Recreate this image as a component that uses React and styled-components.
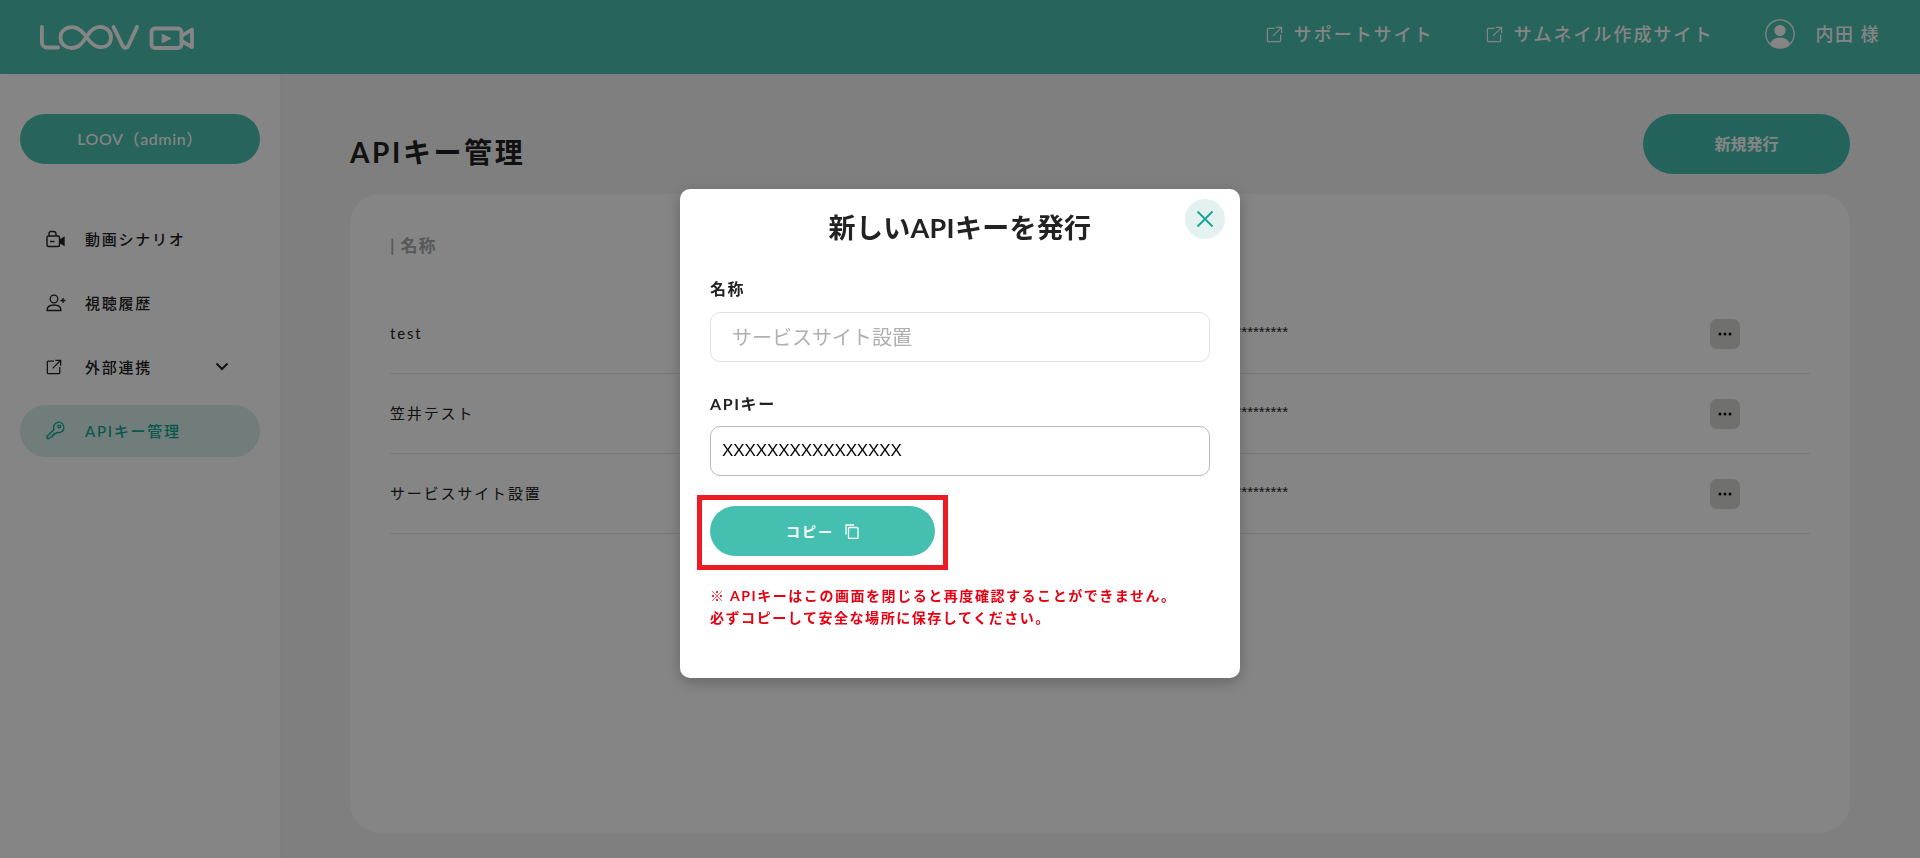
import React from "react";
import styled, { createGlobalStyle } from "styled-components";

const FONT = `"Lato", "Noto Sans CJK JP", sans-serif`;

const Global = createGlobalStyle`
  html, body { margin: 0; padding: 0; height: 100%; overflow: hidden; }
  body { font-family: ${FONT}; color: #222; background: #f4f4f4; }
  * { box-sizing: border-box; }
`;

const Page = styled.div`
  display: flex;
  flex-direction: column;
  height: 100vh;
`;

const Header = styled.header`
  flex: 0 0 74px;
  display: flex;
  align-items: center;
  justify-content: space-between;
  padding: 0 40px;
  background: #4bc0b1;
  color: #fff;
`;

const HeaderNav = styled.nav`
  display: flex;
  align-items: center;
  gap: 52px;
  margin-top: -6px;
`;

const HeaderLink = styled.a`
  display: flex;
  align-items: center;
  gap: 11px;
  font-size: 18px;
  font-weight: 500;
  letter-spacing: 2px;
  line-height: 30px;
`;

const UserBox = styled.div`
  display: flex;
  align-items: center;
  gap: 20px;
  font-size: 18px;
  font-weight: 500;
  letter-spacing: 1.5px;
  line-height: 30px;
`;

const Body = styled.div`
  flex: 1;
  display: flex;
  min-height: 0;
`;

const Sidebar = styled.aside`
  flex: 0 0 280px;
  background: #fff;
  padding: 40px 20px;
  box-shadow: 3px 0 8px rgba(0, 0, 0, 0.03);
`;

const OrgButton = styled.div`
  height: 50px;
  border-radius: 25px;
  padding-bottom: 2px;
  background: #4bc0b1;
  color: #fff;
  display: flex;
  align-items: center;
  justify-content: center;
  font-size: 16px;
  font-weight: 500;
  letter-spacing: 0.6px;
`;

const NavList = styled.ul`
  list-style: none;
  margin: 49px 0 0;
  padding: 0;
  display: flex;
  flex-direction: column;
  gap: 12px;
`;

const NavItem = styled.li`
  height: 52px;
  border-radius: 26px;
  display: flex;
  align-items: center;
  padding: 0 31px 1px 26px;
  font-size: 15px;
  font-weight: 500;
  letter-spacing: 1.75px;
  background: ${(p) => (p.$active ? "#d6efec" : "transparent")};
  color: ${(p) => (p.$active ? "#12a594" : "#222")};
`;

const NavIconBox = styled.span`
  flex: 0 0 39px;
  display: flex;
  align-items: center;
`;

const NavLabel = styled.span`
  flex: 1;
`;

const Main = styled.main`
  flex: 1;
  padding: 40px 70px 25px;
  display: flex;
  flex-direction: column;
  min-width: 0;
`;

const TitleRow = styled.div`
  display: flex;
  align-items: flex-end;
  justify-content: space-between;
  margin-bottom: 20px;
`;

const PageTitle = styled.h1`
  margin: 0 0 2px;
  font-size: 28px;
  font-weight: 700;
  line-height: 40px;
  letter-spacing: 2.6px;
  color: #222;
`;

const IssueButton = styled.button`
  width: 207px;
  height: 60px;
  border: 0;
  border-radius: 30px;
  padding: 0 0 2px;
  background: #45bfb0;
  color: #fff;
  font-family: ${FONT};
  font-size: 16px;
  font-weight: 700;
`;

const Card = styled.section`
  flex: 1;
  background: #fff;
  border-radius: 30px;
  padding: 40px 40px;
`;

const TableHead = styled.div`
  font-size: 17px;
  font-weight: 700;
  line-height: 24px;
  letter-spacing: 1px;
  color: #a4acaa;
  margin-bottom: 36px;
`;

const Row = styled.div`
  height: 80px;
  display: grid;
  grid-template-columns: 706px 192px 1fr;
  align-items: center;
  border-bottom: 1px solid #e8e8e8;
  font-size: 15px;
  letter-spacing: 1.85px;
  color: #222;
`;

const NameCell = styled.span`
  margin-bottom: 2px;
`;

const KeyCell = styled.span`
  margin-bottom: 4px;
  font-family: "Liberation Sans", sans-serif;
  font-size: 15px;
  letter-spacing: 0;
  text-align: right;
  white-space: nowrap;
  overflow: hidden;
  direction: rtl;
`;

const DotsButton = styled.button`
  justify-self: end;
  margin-right: 70px;
  width: 30px;
  height: 30px;
  padding: 0;
  border: 0;
  border-radius: 7px;
  background: #d6d8d4;
  display: flex;
  align-items: center;
  justify-content: center;
`;

const Overlay = styled.div`
  position: fixed;
  inset: 0;
  background: rgba(0, 0, 0, 0.48);
  display: flex;
  justify-content: center;
  align-items: flex-start;
  padding-top: 189px;
`;

const Modal = styled.div`
  position: relative;
  width: 560px;
  background: #fff;
  border-radius: 10px;
  padding: 21px 30px 49px;
  box-shadow: 0 4px 16px rgba(0, 0, 0, 0.25);
`;

const CloseButton = styled.button`
  position: absolute;
  top: 10px;
  right: 15px;
  width: 40px;
  height: 40px;
  padding: 0;
  border: 0;
  border-radius: 50%;
  background: #e3f2f0;
  color: #12a594;
  display: flex;
  align-items: center;
  justify-content: center;
`;

const ModalTitle = styled.h2`
  margin: 0 0 31px;
  text-align: center;
  font-size: 27px;
  font-weight: 700;
  line-height: 36px;
  letter-spacing: 0.3px;
  color: #222;
`;

const Field = styled.label`
  display: flex;
  flex-direction: column;
  gap: ${(p) => p.$gap}px;
  margin-bottom: 30px;
`;

const FieldLabel = styled.span`
  font-size: 16px;
  font-weight: 700;
  line-height: 24px;
  letter-spacing: 1.6px;
  color: #222;
`;

const NameInput = styled.input`
  height: 50px;
  border: 1px solid #e2e2e2;
  border-radius: 10px;
  padding: 0 21px;
  font-family: ${FONT};
  font-size: 20px;
  outline: none;
  background: #fff;
  &::placeholder { color: #b0b0b0; opacity: 1; }
`;

const KeyInput = styled.input`
  height: 50px;
  border: 1px solid #bbbbbb;
  border-radius: 10px;
  padding: 0 11px;
  font-family: "Liberation Sans", sans-serif;
  font-size: 17px;
  letter-spacing: -0.1px;
  color: #000;
  outline: none;
  background: #fff;
`;

const CopyWrap = styled.div`
  position: relative;
  width: 225px;
  &::after {
    content: "";
    position: absolute;
    left: -13px;
    right: -13px;
    top: -11px;
    bottom: -14px;
    border: 5px solid #ed1c24;
    pointer-events: none;
  }
`;

const CopyButton = styled.button`
  width: 100%;
  height: 50px;
  border: 0;
  border-radius: 25px;
  background: #45bfb0;
  color: #fff;
  font-family: ${FONT};
  font-size: 14px;
  font-weight: 700;
  letter-spacing: 2px;
  display: flex;
  align-items: center;
  justify-content: center;
  gap: 11px;
`;

const Notice = styled.p`
  margin: 29px 0 0;
  font-size: 14px;
  font-weight: 700;
  line-height: 22px;
  letter-spacing: 1.55px;
  color: #e60012;
`;

const ExternalIcon = ({ size = 17, w = 1.3 }) => (
  <svg width={size} height={size} viewBox="0 0 18 18" fill="none" stroke="currentColor" strokeWidth={w}>
    <path d="M9 2.5H2.5a1 1 0 0 0-1 1v12a1 1 0 0 0 1 1h12a1 1 0 0 0 1-1V9" />
    <path d="M7.5 10.5 16 2M10.5 1.5h6v6" />
  </svg>
);

const Logo = () => (
  <svg width="154" height="25" viewBox="0 0 154 25" fill="none" stroke="currentColor" strokeWidth="3.8" strokeLinecap="round" strokeLinejoin="round">
    <path d="M1.9 1.9V17.5a5 5 0 0 0 5 5H18" />
    <path d="M37 3.2C28 -0.2 20.5 5.5 20.5 12.5S26 23 32 23C40 23 43.5 16 47 11C50.5 5.5 54.5 1.9 60 1.9C67 1.9 71 7 71 12.5C71 18.5 67 23 59 22" />
    <path d="M37 3.2C41 4.6 43.5 8 47 12.5C50 17 53 21 59 22" />
    <path d="M73.5 1.9 82 19.5C84 24 87 24 89 19.5L97 1.9" />
    <rect x="111.5" y="3.5" width="30" height="19.5" rx="3.5" />
    <path d="M141.5 11 152 4.5V22L141.5 16" />
    <path d="M122.5 9.5 131 13.5 122.5 17.5Z" fill="currentColor" strokeWidth="1" />
  </svg>
);

const Avatar = () => (
  <svg width="30" height="30" viewBox="0 0 30 30">
    <defs>
      <clipPath id="av"><circle cx="15" cy="15" r="14" /></clipPath>
    </defs>
    <circle cx="15" cy="15" r="14.2" fill="none" stroke="currentColor" strokeWidth="1.3" />
    <circle cx="15" cy="11.5" r="5.6" fill="currentColor" />
    <ellipse cx="15" cy="26" rx="10" ry="7.5" fill="currentColor" clipPath="url(#av)" />
  </svg>
);

const VideoIcon = () => (
  <svg width="20" height="20" viewBox="0 0 20 20" fill="none" stroke="currentColor" strokeWidth="1.4">
    <path d="M3 7V4.5A2 2 0 0 1 5 2.5H7.5A2.5 2.5 0 0 1 10 5V7" />
    <rect x="1" y="7" width="12.5" height="10.5" rx="1.5" />
    <path d="M4 12.5H8.5" />
    <path d="M14 11 18 8.5V16L14 13.5Z" fill="currentColor" />
  </svg>
);

const UserPlusIcon = () => (
  <svg width="20" height="20" viewBox="0 0 20 20" fill="none" stroke="currentColor" strokeWidth="1.3">
    <circle cx="8" cy="6" r="3.8" />
    <path d="M1 17.5C1 13.5 4.5 12 8 12S15 13.5 15 17.5Z" strokeLinejoin="round" />
    <path d="M14.5 7.5H19.5M17 5V10" />
  </svg>
);

const KeyIcon = () => (
  <svg width="19" height="19" viewBox="0 0 19 19" fill="none" stroke="currentColor" strokeWidth="1.3" strokeLinejoin="round">
    <path d="M8 8.5A5.2 5.2 0 1 1 11 11.3L9.7 12.5H8V14.2H6.3V15.9H4.6L3 17.5H1V15.3Z" />
    <circle cx="13.2" cy="5.5" r="1.4" />
  </svg>
);

const Chevron = () => (
  <svg width="14" height="9" viewBox="0 0 14 9" fill="none" stroke="currentColor" strokeWidth="2">
    <path d="M1.5 1.5 7 7l5.5-5.5" />
  </svg>
);

const CopyIcon = () => (
  <svg width="14" height="15" viewBox="0 0 14 15" fill="none" stroke="currentColor" strokeWidth="1.3">
    <path d="M1 10.5V1H9" />
    <rect x="3.5" y="3.5" width="9.5" height="11" rx="1" />
  </svg>
);

const CloseIcon = () => (
  <svg width="18" height="18" viewBox="0 0 18 18" fill="none" stroke="currentColor" strokeWidth="1.8">
    <path d="M1.5 1.5 16.5 16.5M16.5 1.5 1.5 16.5" />
  </svg>
);

const DotsIcon = () => (
  <svg width="14" height="4" viewBox="0 0 14 4" fill="#111">
    <circle cx="2" cy="2" r="1.5" />
    <circle cx="7" cy="2" r="1.5" />
    <circle cx="12" cy="2" r="1.5" />
  </svg>
);

const rows = ["test", "笠井テスト", "サービスサイト設置"];
const MASK = "*".repeat(33);

export default function App() {
  return (
    <Page>
      <Global />
      <Header>
        <Logo />
        <HeaderNav>
          <HeaderLink><ExternalIcon />サポートサイト</HeaderLink>
          <HeaderLink><ExternalIcon />サムネイル作成サイト</HeaderLink>
          <UserBox><Avatar />内田 様</UserBox>
        </HeaderNav>
      </Header>
      <Body>
        <Sidebar>
          <OrgButton>LOOV（admin）</OrgButton>
          <NavList>
            <NavItem><NavIconBox><VideoIcon /></NavIconBox><NavLabel>動画シナリオ</NavLabel></NavItem>
            <NavItem><NavIconBox><UserPlusIcon /></NavIconBox><NavLabel>視聴履歴</NavLabel></NavItem>
            <NavItem><NavIconBox><ExternalIcon size={16} w={1.4} /></NavIconBox><NavLabel>外部連携</NavLabel><Chevron /></NavItem>
            <NavItem $active><NavIconBox><KeyIcon /></NavIconBox><NavLabel>APIキー管理</NavLabel></NavItem>
          </NavList>
        </Sidebar>
        <Main>
          <TitleRow>
            <PageTitle>APIキー管理</PageTitle>
            <IssueButton>新規発行</IssueButton>
          </TitleRow>
          <Card>
            <TableHead>| 名称</TableHead>
            {rows.map((name) => (
              <Row key={name}>
                <NameCell>{name}</NameCell>
                <KeyCell>{MASK}</KeyCell>
                <DotsButton><DotsIcon /></DotsButton>
              </Row>
            ))}
          </Card>
        </Main>
      </Body>
      <Overlay>
        <Modal>
          <CloseButton><CloseIcon /></CloseButton>
          <ModalTitle>新しいAPIキーを発行</ModalTitle>
          <Field $gap={11}>
            <FieldLabel>名称</FieldLabel>
            <NameInput placeholder="サービスサイト設置" readOnly />
          </Field>
          <Field $gap={10}>
            <FieldLabel>APIキー</FieldLabel>
            <KeyInput value="XXXXXXXXXXXXXXXX" readOnly />
          </Field>
          <CopyWrap>
            <CopyButton>コピー<CopyIcon /></CopyButton>
          </CopyWrap>
          <Notice>
            ※ APIキーはこの画面を閉じると再度確認することができません。<br />
            必ずコピーして安全な場所に保存してください。
          </Notice>
        </Modal>
      </Overlay>
    </Page>
  );
}
